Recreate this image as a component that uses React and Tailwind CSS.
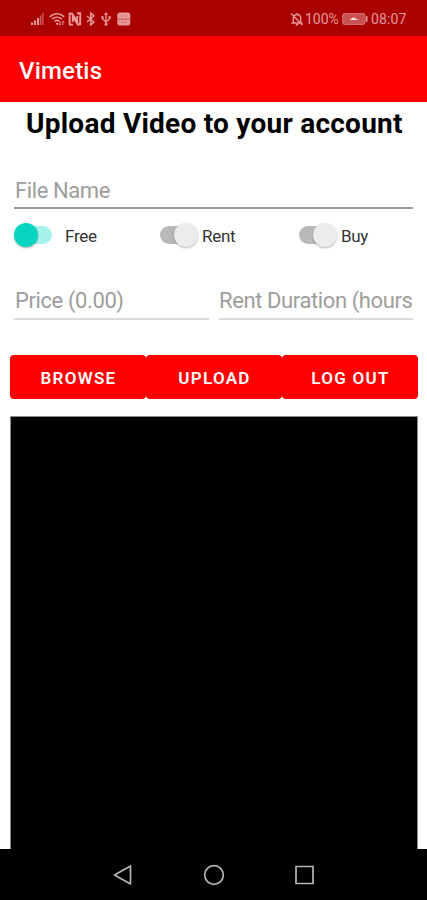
import React from "react";

const StatusBar = () => {
  return (
    <div className="flex h-9 items-center justify-between bg-[#a90000] pl-[30px] pr-5 text-[#e69a9a]">
      <div className="flex items-center pt-0.5">
        <svg className="h-3.5 w-3.5" viewBox="0 0 14 14" fill="currentColor">
          <path d="M1 10.5h2V13H1zM4 8.5h2V13H4zM7 6h2v7H7z" />
          <path d="M9.8 3.5h1.6V13H9.8zM12.2 1h1.3v12h-1.3z" opacity="0.6" />
        </svg>
        <svg className="ml-[5px] h-3.5 w-4" viewBox="0 0 16 14" fill="none" stroke="currentColor" strokeWidth="1.6">
          <path d="M0.8 4.8C5 .8 11 .8 15.2 4.8M3.2 7.2c2.8-2.6 6.8-2.6 9.6 0M5.5 9.5c1.5-1.4 3.3-1.4 4.6-.3" />
          <circle cx="8" cy="11.8" r="1.1" fill="currentColor" stroke="none" />
          <path d="M11 9v4M9.8 11.6 11 13M13.8 13V9M15 10.4 13.8 9" strokeWidth="1" />
        </svg>
        <svg className="ml-[3px] h-3.5 w-3.5" viewBox="0 0 14 14" fill="none" stroke="currentColor">
          <path d="M5 12.6H1.6V1.6L4 1.4l5.2 8.4V4" strokeWidth="1.9" />
          <path d="M9 1.2h3.2v11L10 12.6 4.8 4.2V10" strokeWidth="1.9" />
        </svg>
        <svg className="ml-1 h-3.5 w-2.5" viewBox="0 0 10 14" fill="none" stroke="currentColor" strokeWidth="1.5">
          <path d="m1 4 7 6-3.2 3V1L8 4l-7 6" />
        </svg>
        <svg className="ml-[5px] h-3.5 w-2.5" viewBox="0 0 10 14" fill="none" stroke="currentColor" strokeWidth="1.3">
          <path d="M5 2v10M1.5 5v2L5 10l3.5-3V5" />
          <path d="m5 0 2 3H3z" fill="currentColor" stroke="none" />
          <circle cx="5" cy="12.3" r="1.5" fill="currentColor" stroke="none" />
          <path d="M.3 4.2h2.4v2H.3zM7.3 4.2h2.4v2H7.3z" fill="currentColor" stroke="none" />
        </svg>
        <svg className="ml-1.5 h-3.5 w-3.5" viewBox="0 0 14 14">
          <rect x="0.3" y="0.5" width="13" height="13" rx="2.8" fill="currentColor" />
          <path d="M0.3 7.2h13" stroke="#c24d4d" strokeWidth="1" />
          <path d="M3.5 4h2.5M8 4h2.5M4 10h6" stroke="#d07070" strokeWidth="1" />
        </svg>
      </div>
      <div className="flex items-center pt-0.5">
        <svg className="h-3.5 w-3.5" viewBox="0 0 14 14" fill="none" stroke="currentColor" strokeWidth="1.4">
          <path d="M1.5 11h11M3.3 11V6.5C3.3 4 4.8 2.5 7 2.5s3.7 1.5 3.7 4V11M7 2.5V1M5.8 12.8h2.4M1 1.5l11.5 11.5" />
        </svg>
        <span className="ml-[1px] w-[35px] whitespace-nowrap text-[14px] leading-4">100%</span>
        <svg className="ml-[2px] h-3 w-[26px]" viewBox="0 0 26 12">
          <rect x="0.6" y="0.6" width="22.5" height="10.8" rx="2" fill="#c95050" stroke="#d87878" />
          <path d="M24 3.2h1.5v5.6H24z" fill="currentColor" />
          <path d="M7.5 6.9 11.5 4.2l1.5 1 3.5 1.7z" fill="#ffe4e4" />
        </svg>
        <span className="ml-[3px] w-9 whitespace-nowrap text-[14px] leading-4 tracking-[0.1px]">08:07</span>
      </div>
    </div>
  );
};

const Switch = ({ on, label }) => {
  return (
    <div className="flex h-7 items-center">
      <div className={`relative h-[18px] shrink-0 rounded-full ${on ? "ml-1 mr-[13px] w-[38px] bg-[#a5f3ea]" : "ml-[13px] mr-[6px] w-9 bg-[#b9b9b9]"}`}>
        <div
          className={`absolute -top-[3px] h-6 w-6 rounded-full shadow-[0_1px_2px_rgba(0,0,0,0.3)] ${on ? "left-0 bg-[#08d5bf]" : "left-[14px] bg-[#ececec]"}`}
        ></div>
      </div>
      <span className="pt-px text-[17px] leading-5 tracking-[-0.3px] text-[#333]">{label}</span>
    </div>
  );
};

const Field = ({ text, className }) => {
  return (
    <div className={`whitespace-nowrap text-[22px] leading-[26px] tracking-[-0.4px] text-[#9d9d9d] ${className}`}>
      {text}
    </div>
  );
};

const Button = ({ children }) => {
  return (
    <button className="h-11 flex-1 rounded-[4px] bg-[#ff0000] pl-px pt-px text-[17px] font-semibold leading-5 tracking-[1.3px] text-white">
      {children}
    </button>
  );
};

const App = () => {
  return (
    <div className="flex h-[900px] w-[427px] flex-col overflow-hidden bg-white font-['Roboto',sans-serif]">
      <StatusBar />
      <header className="flex h-[66px] items-center bg-[#ff0000] pl-[19px] pt-[3px] text-[24px] font-medium tracking-[0.2px] text-white">
        Vimetis
      </header>
      <h1 className="h-[75px] whitespace-nowrap pl-[26px] pt-[5px] text-[28px] font-bold leading-[34px] tracking-[0.25px] text-black">
        Upload Video to your account
      </h1>
      <Field text="File Name" className="mx-3.5 h-8 border-b-2 border-[#9a9a9a] pl-px pt-px" />
      <div className="mt-3 flex h-7 pl-2.5">
        <div className="w-[137px]">
          <Switch on label="Free" />
        </div>
        <div className="w-[139px]">
          <Switch label="Rent" />
        </div>
        <Switch label="Buy" />
      </div>
      <div className="ml-3.5 mt-[38px] flex gap-2.5">
        <Field text="Price (0.00)" className="h-[33px] w-[195px] border-b-2 border-[#dadada] pl-px pt-px" />
        <Field text="Rent Duration (hours" className="h-[33px] w-[194px] border-b-2 border-[#dadada] pt-px" />
      </div>
      <div className="ml-2.5 mr-[9px] mt-[35px] flex">
        <Button>BROWSE</Button>
        <Button>UPLOAD</Button>
        <Button>LOG OUT</Button>
      </div>
      <div className="ml-2.5 mr-[9px] mt-[17px] h-[433px] border border-b-0 border-[#8a8a8a] bg-black"></div>
      <nav className="flex flex-1 items-center justify-between bg-black px-[112px]">
        <svg className="h-[22px] w-[22px]" viewBox="0 0 22 22" fill="none" stroke="#b5b5b5" strokeWidth="1.7">
          <path d="M2.5 11 18.5 2v18z" strokeLinejoin="round" />
        </svg>
        <svg className="h-[22px] w-[22px]" viewBox="0 0 22 22" fill="none" stroke="#b5b5b5" strokeWidth="1.7">
          <circle cx="11" cy="11" r="9.3" />
        </svg>
        <svg className="h-[22px] w-[22px]" viewBox="0 0 22 22" fill="none" stroke="#b5b5b5" strokeWidth="1.7">
          <path d="M3 2.5h17v17H3z" />
        </svg>
      </nav>
    </div>
  );
};

export default App;
